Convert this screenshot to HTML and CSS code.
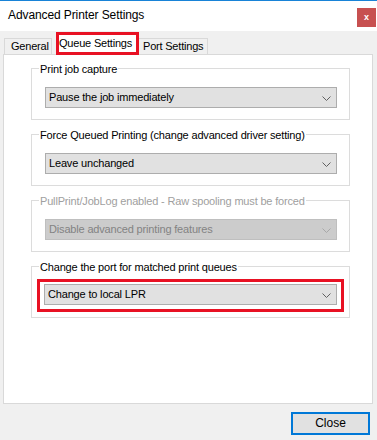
FILE: index.html
```html
<!DOCTYPE html>
<html>
<head>
<meta charset="utf-8">
<link rel="stylesheet" href="styles.css">
</head>
<body>
<div class="window">
  <div class="titlebar">
    <span class="title">Advanced Printer Settings</span>
    <span class="close-x">x</span>
  </div>
  <div class="tabs">
    <div class="tab tab-general">General</div>
    <div class="tab tab-active">Queue Settings</div>
    <div class="tab tab-port">Port Settings</div>
  </div>
  <div class="panel">
    <div class="group">
      <div class="group-label">Print job capture</div>
      <div class="combo">
        <span class="combo-text">Pause the job immediately</span>
        <svg class="chev" width="9" height="5" viewBox="0 0 9 5"><path d="M0.5 0.5 L4.5 4.5 L8.5 0.5" fill="none" stroke="#606060" stroke-width="1"/></svg>
      </div>
    </div>
    <div class="group">
      <div class="group-label">Force Queued Printing (change advanced driver setting)</div>
      <div class="combo">
        <span class="combo-text">Leave unchanged</span>
        <svg class="chev" width="9" height="5" viewBox="0 0 9 5"><path d="M0.5 0.5 L4.5 4.5 L8.5 0.5" fill="none" stroke="#606060" stroke-width="1"/></svg>
      </div>
    </div>
    <div class="group group-disabled">
      <div class="group-label">PullPrint/JobLog enabled - Raw spooling must be forced</div>
      <div class="combo combo-disabled">
        <span class="combo-text">Disable advanced printing features</span>
        <svg class="chev" width="9" height="5" viewBox="0 0 9 5"><path d="M0.5 0.5 L4.5 4.5 L8.5 0.5" fill="none" stroke="#a8a8a8" stroke-width="1"/></svg>
      </div>
    </div>
    <div class="group group-last">
      <div class="group-label">Change the port for matched print queues</div>
      <div class="highlight">
        <div class="combo">
          <span class="combo-text">Change to local LPR</span>
          <svg class="chev" width="9" height="5" viewBox="0 0 9 5"><path d="M0.5 0.5 L4.5 4.5 L8.5 0.5" fill="none" stroke="#606060" stroke-width="1"/></svg>
        </div>
      </div>
    </div>
  </div>
  <div class="footer">
    <div class="btn">Close</div>
  </div>
</div>
</body>
</html>
```

FILE: styles.css
```css
html, body {
  margin: 0;
  padding: 0;
}
body {
  width: 377px;
  height: 440px;
  background: #f0f0f0;
  font-family: "Liberation Sans", Arial, sans-serif;
  font-size: 11px;
  color: #000;
  overflow: hidden;
}
.window {
  width: 377px;
  height: 440px;
}
.titlebar {
  height: 30px;
  border-top: 1px solid #1883d7;
  background: #fff;
  display: flex;
  align-items: flex-start;
  justify-content: space-between;
}
.title {
  font-size: 12px;
  line-height: 14px;
  margin-top: 7px;
  margin-left: 8px;
  letter-spacing: -0.1px;
}
.close-x {
  width: 19px;
  height: 19px;
  margin-top: 7px;
  margin-right: 1px;
  background: #c75050;
  color: #fff;
  font-weight: bold;
  font-size: 9px;
  line-height: 18px;
  text-align: center;
}
.tabs {
  display: flex;
  align-items: flex-end;
  padding-top: 1px;
  padding-left: 4px;
  height: 22px;
}
.tab {
  box-sizing: border-box;
  line-height: 13px;
  letter-spacing: -0.2px;
  white-space: nowrap;
}
.tab-general,
.tab-port {
  height: 16px;
  border: 1px solid #d9d9d9;
  border-bottom: none;
  padding-top: 1px;
  background: #f0f0f0;
}
.tab-general {
  width: 48px;
  padding-left: 6px;
  margin-right: 4px;
}
.tab-port {
  width: 69px;
  padding-left: 4px;
  border-left: none;
}
.tab-active {
  position: relative;
  z-index: 1;
  width: 83px;
  height: 23px;
  margin-bottom: -1px;
  border: 3px solid #e81123;
  background: #fff;
  padding-top: 2px;
  padding-left: 0;
}
.panel {
  box-sizing: border-box;
  width: 370px;
  height: 350px;
  margin-left: 3px;
  border: 1px solid #d9d9d9;
  background: #fff;
  padding-left: 27px;
  padding-top: 13px;
}
.group {
  box-sizing: border-box;
  width: 319px;
  border: 1px solid #dcdcdc;
  padding: 0 12px 11px 13px;
  margin-bottom: 14px;
}
.group-label {
  width: fit-content;
  background: #fff;
  line-height: 13px;
  margin: -6px 0 0 -6px;
  padding: 0 1px;
  letter-spacing: -0.17px;
  white-space: nowrap;
}
.group-disabled .group-label {
  color: #a0a0a0;
}
.combo {
  box-sizing: border-box;
  height: 21px;
  margin-top: 11px;
  border: 1px solid #adadad;
  background: #e1e1e1;
  display: flex;
  align-items: center;
  justify-content: space-between;
  padding: 0 5px 0 3px;
}
.combo-text {
  line-height: 13px;
  letter-spacing: -0.17px;
  white-space: nowrap;
}
.combo-disabled {
  background: #cccccc;
  border-color: #bfbfbf;
  color: #838383;
}
.chev {
  display: block;
  margin-top: 1px;
}
.highlight {
  margin: 5px -7px -6px -8px;
  border: 3px solid #e81123;
  padding: 2px 4px 4px 4px;
}
.highlight .combo {
  margin-top: 0;
}
.footer {
  display: flex;
  justify-content: flex-end;
  padding-top: 8px;
  padding-right: 7px;
}
.btn {
  box-sizing: border-box;
  width: 79px;
  height: 23px;
  border: 2px solid #0078d7;
  background: #e1e1e1;
  text-align: center;
  font-size: 12px;
  line-height: 19px;
}
```
